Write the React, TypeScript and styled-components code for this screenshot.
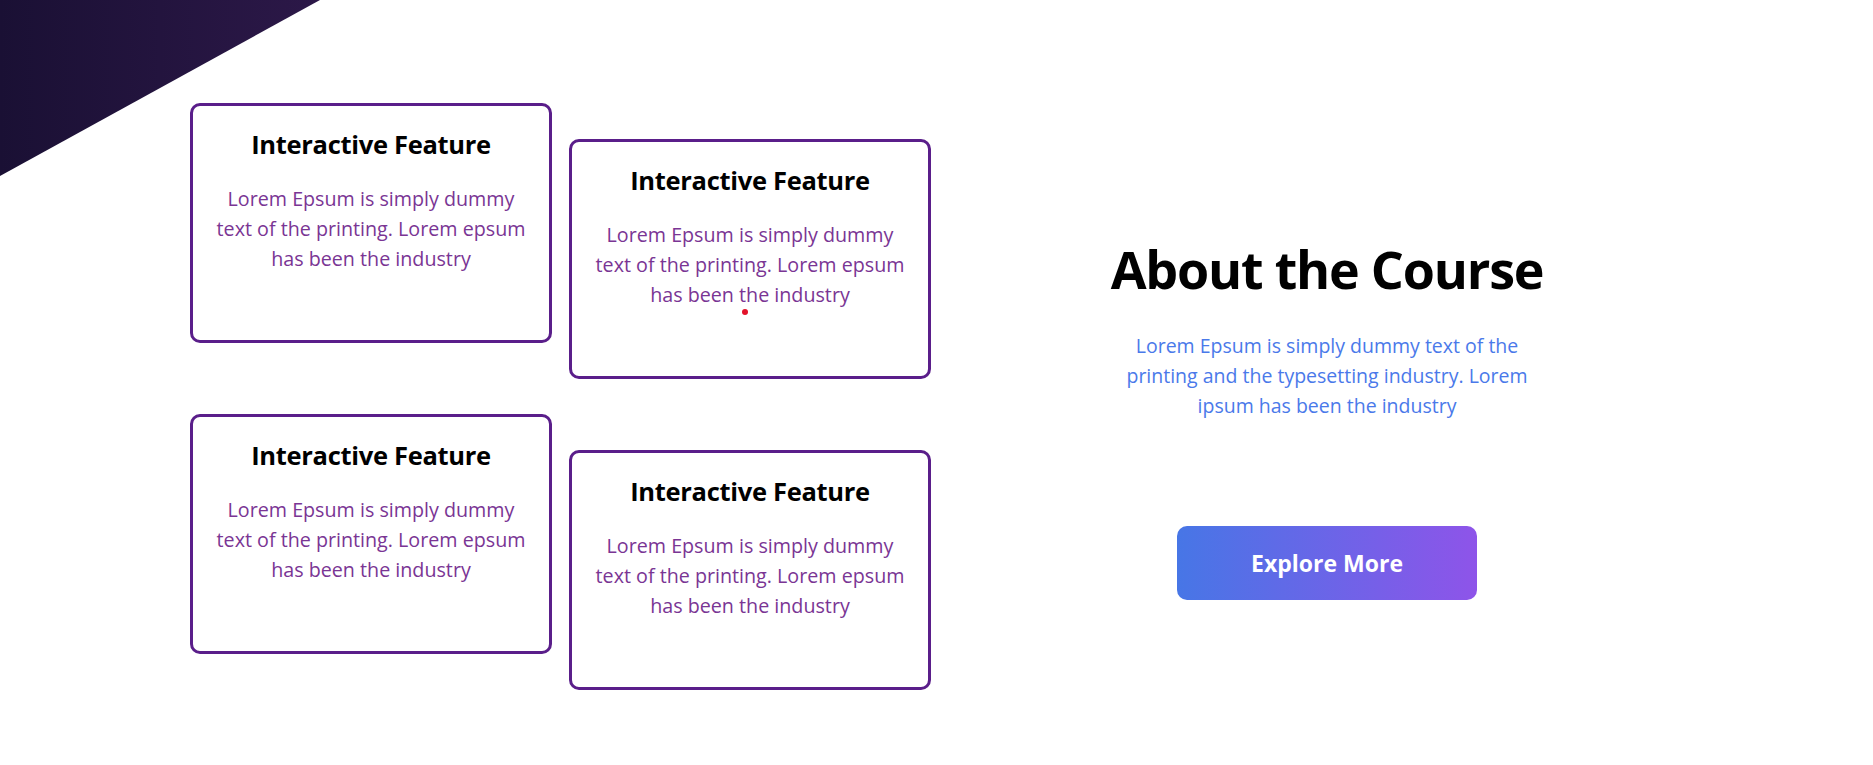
import styled, { createGlobalStyle } from "styled-components";

// global reset
const GlobalStyle = createGlobalStyle`
  * {
    box-sizing: border-box;
  }

  body {
    margin: 0;
    background: #ffffff;
    font-family: "Open Sans", "Noto Sans", sans-serif;
  }
`;

// styled components
const Page = styled.section`
  position: relative;
  display: flex;
  align-items: center;
  min-height: 765px;
  padding: 103px 0 76px 190px;
  overflow: hidden;
`;

const Corner = styled.div`
  position: absolute;
  top: 0;
  left: 0;
  width: 320px;
  height: 176px;
  background: linear-gradient(90deg, #1a1034 0%, #2c1848 100%);
  clip-path: polygon(0 0, 100% 0, 0 100%);
`;

const FeatureGrid = styled.div`
  display: grid;
  grid-template-columns: 362px 362px;
  column-gap: 17px;
  row-gap: 35px;
`;

const Card = styled.div<{ $shifted?: boolean }>`
  position: relative;
  width: 362px;
  height: 240px;
  margin-top: ${(props) => (props.$shifted ? "36px" : "0")};
  padding: 21px 17px;
  border: 3px solid #5a1e8a;
  border-radius: 10px;
  background: #ffffff;
  text-align: center;
`;

const CardTitle = styled.h3`
  margin: 0;
  font-size: 25.5px;
  font-weight: 700;
  letter-spacing: -0.3px;
  color: #000000;
`;

const CardText = styled.p`
  margin: 23px 0 0;
  font-size: 19.7px;
  line-height: 30px;
  color: #7a3594;
`;

// red pointer dot visible over the second card
const CursorDot = styled.span`
  position: absolute;
  left: 170px;
  top: 167px;
  width: 6px;
  height: 6px;
  border-radius: 50%;
  background: #e3122a;
`;

const About = styled.div`
  display: flex;
  flex-direction: column;
  align-items: center;
  width: 520px;
  margin-left: 136px;
  margin-top: 45px;
  text-align: center;
`;

const Heading = styled.h1`
  margin: 0;
  font-size: 52px;
  line-height: 1.2;
  font-weight: 700;
  letter-spacing: -1.2px;
  color: #000000;
`;

const Intro = styled.p`
  max-width: 430px;
  margin: 30px 0 0;
  font-size: 19.5px;
  line-height: 30px;
  color: #4a79ea;
`;

const ExploreButton = styled.button`
  width: 300px;
  height: 74px;
  margin-top: 105px;
  border: none;
  border-radius: 10px;
  background: linear-gradient(90deg, #4776e6 0%, #8e54e9 100%);
  color: #ffffff;
  font-family: inherit;
  font-size: 23px;
  font-weight: 700;
  cursor: pointer;
`;

const features = [
  { id: 1, shifted: false, dot: false },
  { id: 2, shifted: true, dot: true },
  { id: 3, shifted: false, dot: false },
  { id: 4, shifted: true, dot: false },
];

// Main
export default function App() {
  return (
    <>
      <GlobalStyle />
      <Page>
        <Corner />
        <FeatureGrid>
          {features.map((f) => (
            <Card key={f.id} $shifted={f.shifted}>
              <CardTitle>Interactive Feature</CardTitle>
              <CardText>
                Lorem Epsum is simply dummy text of the printing. Lorem epsum
                has been the industry
              </CardText>
              {f.dot && <CursorDot />}
            </Card>
          ))}
        </FeatureGrid>
        <About>
          <Heading>About the Course</Heading>
          <Intro>
            Lorem Epsum is simply dummy text of the printing and the
            typesetting industry. Lorem ipsum has been the industry
          </Intro>
          <ExploreButton>Explore More</ExploreButton>
        </About>
      </Page>
    </>
  );
}
